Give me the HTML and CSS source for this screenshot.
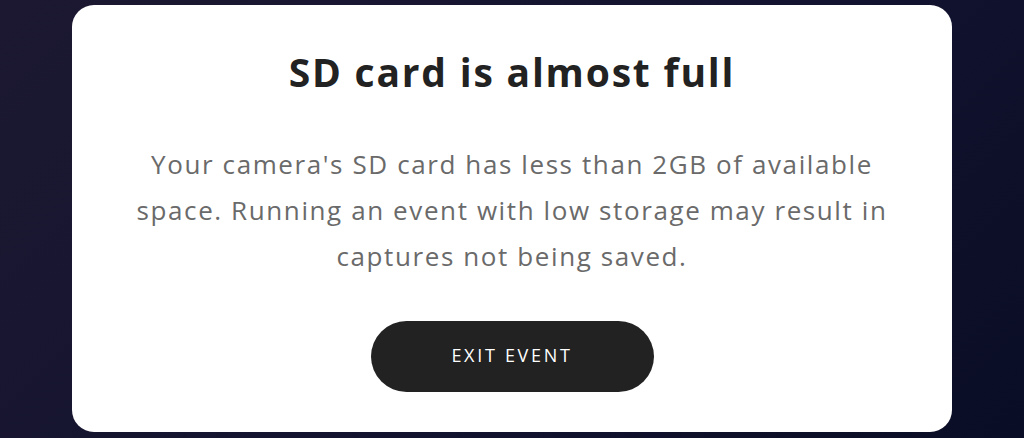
FILE: index.html
```html
<!DOCTYPE html>
<html lang="en">
<head>
<meta charset="utf-8">
<title>SD card is almost full</title>
<link rel="stylesheet" href="styles.css">
</head>
<body>
<main class="screen">
  <section class="card">
    <h1 class="title">SD card is almost full</h1>
    <p class="message">Your camera's SD card has less than 2GB of available<br>space. Running an event with low storage may result in<br>captures not being saved.</p>
    <button class="exit-btn" type="button">EXIT EVENT</button>
  </section>
</main>
</body>
</html>
```
FILE: styles.css
```css
html, body {
  margin: 0;
  padding: 0;
  height: 100%;
}
body {
  background: linear-gradient(135deg, #1c1831 0%, #141430 50%, #0a0d26 100%);
  font-family: "Open Sans", "Noto Sans", sans-serif;
  overflow: hidden;
}
.screen {
  box-sizing: border-box;
  height: 438px;
  padding: 5px 72px 6px 72px;
  display: flex;
}
.card {
  flex: 1;
  background: #ffffff;
  border-radius: 22px;
  display: flex;
  flex-direction: column;
  align-items: center;
  padding-top: 43px;
  box-sizing: border-box;
}
.title {
  margin: 0;
  font-size: 39px;
  font-weight: 700;
  line-height: 48px;
  letter-spacing: 1.8px;
  color: #222222;
}
.message {
  margin: 45px 0 0;
  white-space: nowrap;
  text-align: center;
  font-size: 26px;
  line-height: 46px;
  letter-spacing: 1.6px;
  color: #6a6a6a;
}
.exit-btn {
  margin-top: 42px;
  width: 283px;
  height: 71px;
  padding: 0 0 3px;
  border: none;
  border-radius: 36px;
  background: #222222;
  color: #ffffff;
  font-family: inherit;
  font-size: 18px;
  font-weight: 500;
  letter-spacing: 2.7px;
  cursor: pointer;
}
```
